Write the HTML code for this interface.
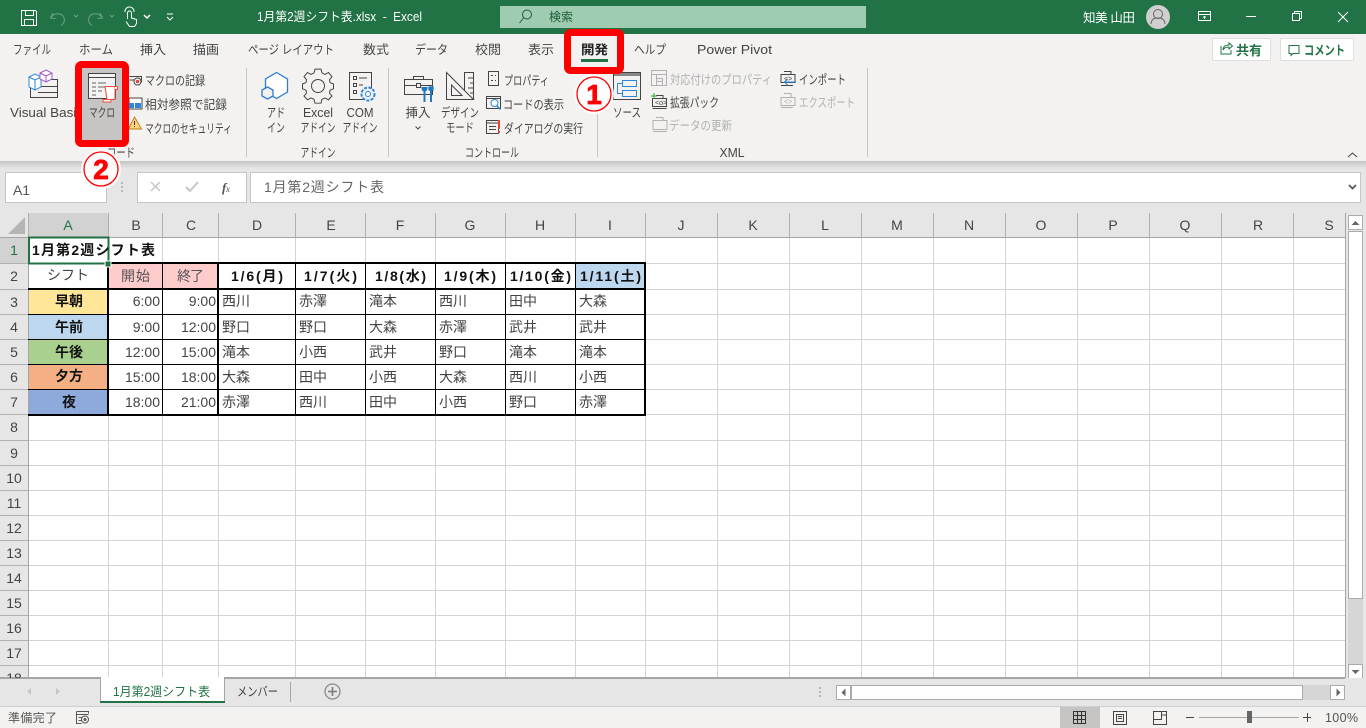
<!DOCTYPE html>
<html lang="ja"><head><meta charset="utf-8"><title>Excel</title>
<style>
html,body{margin:0;padding:0;background:#e6e6e6;overflow:hidden}
svg{display:block}
text{font-family:"Liberation Sans","Noto Sans CJK JP",sans-serif;font-size:12px;fill:#444}
.c{text-anchor:middle}
.r{text-anchor:end}
.t{font-size:12.5px;fill:#444}
.rb{font-size:12.5px;fill:#444}
.dis{font-size:12.5px;fill:#b1b1b1}
.h{font-size:14px;fill:#444;text-anchor:middle}
.cell{font-size:14px;fill:#444}
.b{font-size:14px;font-weight:700;fill:#111}
.line{stroke:#444;stroke-width:1;fill:none}
.g{stroke:#b1b1b1;stroke-width:1;fill:none}
.bl{stroke:#2b88d8;stroke-width:1;fill:none}
.w{stroke:#fff;stroke-width:1;fill:none}
</style></head><body>
<svg width="1366" height="728" viewBox="0 0 1366 728" xmlns="http://www.w3.org/2000/svg">
<defs><linearGradient id="sh" x1="0" y1="0" x2="0" y2="1"><stop offset="0" stop-color="#c4c4c4"/><stop offset="1" stop-color="#e6e6e6"/></linearGradient></defs>
<rect width="1366" height="728" fill="#e6e6e6"/>
<!-- title bar -->
<rect width="1366" height="34" fill="#217346"/>
<g shape-rendering="crispEdges">
<path class="w" d="M21.5 10.5h14l1 1v14h-15zM25.5 10.5v5h8v-5M24.5 25.5v-6h9v6"/>
</g>
<path d="M53 13l-2.500 5 5 .5M51 17.500c3-5 11-5 13 0 1 3 0 6-3 8" stroke="#6ea287" fill="none"/>
<path d="M74 15l2 2 2-2M110 15l2 2 2-2" stroke="#6ea287" fill="none"/>
<path d="M100 13l2.500 5-5 .5M102 17.500c-3-5-11-5-13 0-1 3 0 6 3 8" stroke="#6ea287" fill="none"/>
<path d="M127.500 19v-6a2 2 0 0 1 4 0v5l5 1.500v4l-2 3h-5l-3.500-5M125 12a4.500 4.500 0 0 1 4-5 4.500 4.500 0 0 1 5 5" stroke="#fff" fill="none"/>
<path d="M144 15l3 3 3-3" stroke="#fff" stroke-width="1.500" fill="none"/>
<path d="M167 14h6M167 17l3 3 3-3" stroke="#fff" fill="none"/>
<text x="257" y="21" style="fill:#fff;font-size:12.500px" textLength="165" lengthAdjust="spacingAndGlyphs">1月第2週シフト表.xlsx&#160;&#160;-&#160;&#160;Excel</text>
<rect x="500" y="6" width="366" height="22" fill="#9fcbb0"/>
<circle cx="527" cy="14.500" r="4.500" fill="none" stroke="#1d5c38"/><path d="M523.500 18l-4 5" stroke="#1d5c38" fill="none"/>
<text x="549" y="21" style="fill:#1d5c38;font-size:12px" textLength="24">検索</text>
<text x="1083" y="22" style="fill:#fff;font-size:12.500px" textLength="52">知美 山田</text>
<circle cx="1158" cy="17" r="12" fill="#cfcfcf"/>
<circle cx="1158" cy="14" r="4.500" fill="none" stroke="#666"/><path d="M1151 24c.5-5 3-6 7-6s6.500 1 7 6" fill="none" stroke="#666"/>
<g shape-rendering="crispEdges">
<path class="w" d="M1198.500 11.500h12v9h-12zM1198.500 14.500h12"/>
<path class="w" d="M1204.500 19v-3M1203 17h3"/>
<path d="M1246 16.500h10" stroke="#fff"/>
<path class="w" d="M1292.500 13.500h7v7h-7zM1294.500 13.500v-2h7v7h-2"/>
</g>
<path d="M1338 12l10 10M1348 12l-10 10" stroke="#fff" fill="none"/>
<!-- ribbon -->
<rect y="34" width="1366" height="127" fill="#f3f2f1"/>
<rect y="161" width="1366" height="8" fill="url(#sh)"/>
<g class="tabs">
<text class="t" x="13" y="54" textLength="38" lengthAdjust="spacingAndGlyphs">ファイル</text>
<text class="t" x="79" y="54" textLength="34" lengthAdjust="spacingAndGlyphs">ホーム</text>
<text class="t" x="140" y="54" textLength="26" lengthAdjust="spacingAndGlyphs">挿入</text>
<text class="t" x="193" y="54" textLength="26" lengthAdjust="spacingAndGlyphs">描画</text>
<text class="t" x="248" y="54" textLength="86" lengthAdjust="spacingAndGlyphs">ページ レイアウト</text>
<text class="t" x="363" y="54" textLength="26" lengthAdjust="spacingAndGlyphs">数式</text>
<text class="t" x="415" y="54" textLength="33" lengthAdjust="spacingAndGlyphs">データ</text>
<text class="t" x="475" y="54" textLength="26" lengthAdjust="spacingAndGlyphs">校閲</text>
<text class="t" x="528" y="54" textLength="26" lengthAdjust="spacingAndGlyphs">表示</text>
<text class="t" x="634" y="54" textLength="32" lengthAdjust="spacingAndGlyphs">ヘルプ</text>
<text class="t" x="697" y="54" textLength="75" lengthAdjust="spacingAndGlyphs">Power Pivot</text>
</g>
<!-- share buttons -->
<rect x="1212.500" y="38.500" width="58" height="22" rx="1" fill="#fff" stroke="#e1dfdd"/>
<rect x="1280.500" y="38.500" width="73" height="22" rx="1" fill="#fff" stroke="#e1dfdd"/>
<path d="M1221 46v8h10v-4M1223 50c0-3 2-5 6-5v-2l3.500 3-3.500 3v-2c-3 0-5 1-6 3z" fill="none" stroke="#217346"/>
<text x="1236" y="55" style="fill:#217346;font-size:13px;font-weight:700" textLength="26" lengthAdjust="spacingAndGlyphs">共有</text>
<path d="M1289 45.500h10v8h-6l-2 2v-2h-2z" fill="none" stroke="#217346"/>
<text x="1304" y="55" style="fill:#217346;font-size:13px;font-weight:700" textLength="41" lengthAdjust="spacingAndGlyphs">コメント</text>
<path d="M1348 157l4.500-4 4.500 4" fill="none" stroke="#444"/>
<!-- separators -->
<g shape-rendering="crispEdges" stroke="#c8c6c4">
<path d="M246.500 68v89M388.500 68v89M597.500 68v89M867.500 68v89"/>
</g>
<!-- Visual Basic icon -->
<g>
<path class="line" d="M30.500 79.500h27v18h-27zM38 86.500h19M38 92.500h19" shape-rendering="crispEdges"/>
<path d="M29 77l6-3 6 3v10l-6 3-6-3z" fill="#fff" stroke="#2b88d8"/><path d="M29 77l6 3 6-3M35 80v10" fill="none" stroke="#2b88d8"/>
<path d="M40 73l6-3 6 3v6l-6 3-6-3z" fill="#fff" stroke="#a454c6"/><path d="M40 73l6 3 6-3M46 76v6" fill="none" stroke="#a454c6"/>
</g>
<text class="rb" x="10" y="117" textLength="73" lengthAdjust="spacingAndGlyphs">Visual Basic</text>
<!-- macro buttons -->
<g>
<path class="line" d="M129.500 76.500h12v6M129.500 80h10" shape-rendering="crispEdges"/>
<circle cx="137.500" cy="81.500" r="3.500" fill="#fff" stroke="#444"/><circle cx="137.500" cy="81.500" r="1.800" fill="#e8443a"/>
<rect x="129" y="98" width="13" height="11" fill="#fff" stroke="#444"/><rect x="129" y="103" width="5" height="5" fill="#2b88d8"/><rect x="135" y="103" width="6" height="5" fill="#2b88d8"/>
<path d="M134.500 117l7 12h-13z" fill="#fcd77a" stroke="#c27c1e"/><rect x="134" y="121" width="1" height="4" fill="#333"/><rect x="134" y="126" width="1" height="1" fill="#333"/>
</g>
<text class="rb" x="145" y="85" textLength="60" lengthAdjust="spacingAndGlyphs">マクロの記録</text>
<text class="rb" x="145" y="109" textLength="82" lengthAdjust="spacingAndGlyphs">相対参照で記録</text>
<text class="rb" x="145" y="133" textLength="87" lengthAdjust="spacingAndGlyphs">マクロのセキュリティ</text>
<text class="rb c" x="121" y="157" textLength="28" lengthAdjust="spacingAndGlyphs">コード</text>
<!-- macro highlighted -->
<rect x="78.500" y="64.500" width="47" height="79" rx="3" fill="#c6c5c3" stroke="#ff0000" stroke-width="7"/>
<rect x="88.500" y="73.500" width="27" height="25" fill="#f3f3f3" stroke="#444"/>
<path d="M88.500 77.500h27" stroke="#444"/>
<path d="M92 83h4M98 83h8M92 87h4M98 87h8M92 91h4M98 91h4M92 95h4" stroke="#666"/>
<path d="M105 86.500h10v13h-8z" fill="#fff" stroke="#ee4b41"/><path d="M103 99.500h8v2.500h-8zM115 86.500h2.500v3h-2.500" fill="#fff" stroke="#ee4b41"/>
<text class="rb" x="89" y="117" textLength="26" lengthAdjust="spacingAndGlyphs">マクロ</text>
<!-- add-ins -->
<path d="M276.500 72.500l11 6.500v13l-11 6.500-11-6.500v-13z" fill="#fff" stroke="#2b7cd3" stroke-width="1.300"/>
<path d="M267.500 87l5.500 3v6l-5.500 3-5.500-3v-6z" fill="#f3f2f1" stroke="#2b7cd3" stroke-width="1.300"/>
<text class="rb c" x="276" y="117" textLength="18" lengthAdjust="spacingAndGlyphs">アド</text><text class="rb c" x="276" y="132" textLength="18" lengthAdjust="spacingAndGlyphs">イン</text>
<g fill="#f3f2f1" stroke="#444"><path d="M315 72h6l1 4 3 1.500 3.500-2 3.500 4.500-2.500 3 .5 3 3.500 1.500v5l-3.500 1.500-.5 3 2.500 3-3.500 4-3.500-2-3 1.500-1 4h-6l-1-4-3-1.500-3.500 2-3.500-4 2.500-3-.5-3-3.500-1.500v-5l3.500-1.500.5-3-2.500-3 3.500-4.500 3.500 2 3-1.500z" transform="translate(-0 0) scale(1 .96)"/><circle cx="318" cy="86" r="6.500"/></g>
<text class="rb c" x="318" y="117" textLength="30" lengthAdjust="spacingAndGlyphs">Excel</text><text class="rb c" x="318" y="132" textLength="35" lengthAdjust="spacingAndGlyphs">アドイン</text>
<g shape-rendering="crispEdges"><path class="line" d="M349.500 72.500h22v27h-22z"/><path class="line" d="M353.500 76.500h3v3h-3zM353.500 83.500h3v3h-3zM353.500 90.500h3v3h-3zM359 78h8M359 85h4"/></g>
<circle cx="368" cy="94" r="6.500" fill="#f3f2f1" stroke="#2b88d8" stroke-width="2" stroke-dasharray="3 1.400"/><circle cx="368" cy="94" r="2.500" fill="#fff" stroke="#2b88d8"/>
<text class="rb c" x="360" y="117" textLength="27" lengthAdjust="spacingAndGlyphs">COM</text><text class="rb c" x="360" y="132" textLength="35" lengthAdjust="spacingAndGlyphs">アドイン</text>
<text class="rb c" x="318" y="157" textLength="35" lengthAdjust="spacingAndGlyphs">アドイン</text>
<!-- controls -->
<g shape-rendering="crispEdges"><path class="line" d="M404.500 79.500h28v15h-28zM413.500 79.500v-3h10v3M404.500 85.500h12M421 85.500h11M416.500 83.500h4v4h-4z"/></g>
<path d="M424.500 87v15M431 87v15" stroke="#1f78c1" stroke-width="2" fill="none"/>
<path d="M422 87c0 3 1 4 2.500 4s2.500-1 2.500-4M429 87h4v3h-4z" stroke="#1f78c1" stroke-width="1.200" fill="#1f78c1"/>
<text class="rb c" x="418" y="117" textLength="25" lengthAdjust="spacingAndGlyphs">挿入</text>
<path d="M415.500 126.500l2.500 2.500 2.500-2.500" fill="none" stroke="#444"/>
<path d="M464.500 72.500h9v27h-9z" fill="#f3f2f1" stroke="#444" shape-rendering="crispEdges"/>
<path d="M468 78h5M470 83h3M468 88h5M470 93h3" stroke="#444" shape-rendering="crispEdges"/>
<path d="M446.500 72.500v27h27z" fill="#f3f2f1" stroke="#444"/><path d="M451.500 85l10.500 10.500h-10.500z" fill="#f3f2f1" stroke="#444"/>
<text class="rb c" x="460" y="117" textLength="38" lengthAdjust="spacingAndGlyphs">デザイン</text><text class="rb c" x="460" y="132" textLength="28" lengthAdjust="spacingAndGlyphs">モード</text>
<g shape-rendering="crispEdges">
<path class="line" d="M488.500 71.500h10v14h-10z"/><path class="line" d="M491 75.500h2M491 80.500h2M495 75.500h1M495 80.500h1"/>
<path class="line" d="M486.500 96.500h14v12h-14zM486.500 98.500h14"/>
<path class="line" d="M486.500 120.500h12v13h-12zM486.500 123h12M489 126.500h7M489 129.500h7"/>
<rect x="498" y="120" width="2" height="9" fill="#e8443a"/><rect x="498" y="131" width="2" height="2" fill="#e8443a"/>
</g>
<circle cx="494.500" cy="103" r="3.500" fill="#fff" stroke="#2b88d8"/><path d="M497 106l3.500 3.500" stroke="#2b88d8" stroke-width="1.500"/>
<text class="rb" x="504" y="85" textLength="45" lengthAdjust="spacingAndGlyphs">プロパティ</text>
<text class="rb" x="503" y="109" textLength="61" lengthAdjust="spacingAndGlyphs">コードの表示</text>
<text class="rb" x="504" y="133" textLength="79" lengthAdjust="spacingAndGlyphs">ダイアログの実行</text>
<text class="rb c" x="492" y="157" textLength="54" lengthAdjust="spacingAndGlyphs">コントロール</text>
<!-- XML -->
<g shape-rendering="crispEdges">
<path class="line" d="M613.500 72.500h27v27h-27z"/><rect x="614" y="73" width="26" height="3" fill="#888"/>
<path class="bl" d="M622.500 80.500h14v6h-14zM622.500 90.500h14v6h-14zM617.500 83.500v10h5M617.500 83.500h5"/>
</g>
<text class="rb c" x="627" y="117" textLength="28" lengthAdjust="spacingAndGlyphs">ソース</text>
<g shape-rendering="crispEdges">
<path class="g" d="M651.500 70.500h15v15h-15zM651.500 74.500h15M656.500 74.500v11M656.500 78.500h6v7h-6M662.500 81.500h-6"/>
<path d="M652.500 98.500h14v8h-14zM656 95.500h7v3" fill="none" stroke="#444"/>
<path d="M652.500 108.500h14" stroke="#444"/>
<path class="g" d="M653 120.500h14v9h-14zM656 117.500h7v3M653 131.500h14"/>
<path class="g" d="M781 97.500h14v8h-14zM784 93.500h7v4M781 107.500h12"/>
</g>
<path d="M651 96h6M654 93v6" stroke="#2aa42a" fill="none"/>
<text x="655" y="105" style="font-size:7px;fill:#444">&lt;o&gt;</text>
<text x="784" y="104" style="font-size:7px;fill:#b1b1b1">&lt;&gt;</text>
<text class="dis" x="670" y="84" textLength="102" lengthAdjust="spacingAndGlyphs">対応付けのプロパティ</text>
<text class="rb" x="670" y="107" textLength="49" lengthAdjust="spacingAndGlyphs">拡張パック</text>
<text class="dis" x="669" y="130" textLength="63" lengthAdjust="spacingAndGlyphs">データの更新</text>
<path d="M781 74.500h14v8h-14zM784 71.500h7v3M781 85.500h12" fill="none" stroke="#444" shape-rendering="crispEdges"/>
<path d="M796 82h-12M787.500 79l-3 3 3 3" fill="none" stroke="#2b88d8"/>
<text x="784" y="81" style="font-size:7px;fill:#444">&lt;&gt;</text>
<text class="rb" x="799" y="84" textLength="47" lengthAdjust="spacingAndGlyphs">インポート</text>
<text class="dis" x="799" y="107" textLength="56" lengthAdjust="spacingAndGlyphs">エクスポート</text>
<text class="rb c" x="732" y="157" textLength="25" lengthAdjust="spacingAndGlyphs">XML</text>
<!-- red tab box -->
<rect x="567.500" y="32.500" width="53" height="38" rx="3" fill="#f3f2f1" stroke="#ff0000" stroke-width="7"/>
<text x="581" y="54" style="font-size:12.500px;font-weight:700;fill:#222" textLength="27" lengthAdjust="spacingAndGlyphs">開発</text>
<rect x="581" y="59" width="27" height="3" fill="#217346"/>
<!-- formula bar -->
<rect x="5.500" y="172.500" width="101" height="30" fill="#fff" stroke="#c6c6c6"/>
<text x="13" y="195" style="font-size:14px;fill:#555" textLength="17">A1</text>
<circle cx="122" cy="183" r="1" fill="#aaa"/><circle cx="122" cy="187" r="1" fill="#aaa"/><circle cx="122" cy="191" r="1" fill="#aaa"/>
<rect x="137.500" y="172.500" width="109" height="30" fill="#fff" stroke="#c6c6c6"/>
<rect x="250.500" y="172.500" width="1110" height="30" fill="#fff" stroke="#c6c6c6"/>
<path d="M151 182l9 9M160 182l-9 9" stroke="#c6c6c6" stroke-width="1.500" fill="none"/>
<path d="M186 187l4 4 8-9" stroke="#c6c6c6" stroke-width="2" fill="none"/>
<text x="222" y="192" style="font-family:'Liberation Serif',serif;font-style:italic;font-size:13px;font-weight:700;fill:#555">f</text>
<text x="226" y="192" style="font-family:'Liberation Serif',serif;font-style:italic;font-size:9px;fill:#555">x</text>
<text x="264" y="192" style="font-size:14px;fill:#666" textLength="120">1月第2週シフト表</text>
<path d="M1349 185l3.500 3.500 3.500-3.500" stroke="#555" stroke-width="1.700" fill="none"/>
<!-- circle badge 2 -->
<circle cx="101" cy="169" r="20" fill="#fff" fill-opacity=".85"/>
<circle cx="101" cy="169" r="17" fill="none" stroke="#ff0000" stroke-width="1.300"/>
<text class="c" x="101" y="179" style="font-size:28px;font-weight:700;fill:#ff0000;stroke:#ff0000;stroke-width:.8">2</text>
<!-- sheet -->
<rect x="28" y="237" width="1317" height="441" fill="#fff"/>
<rect x="0" y="213" width="1345" height="24" fill="#e6e6e6"/>
<rect x="0" y="237" width="28" height="441" fill="#e6e6e6"/>
<rect x="29" y="213" width="80" height="24" fill="#d2d2d2"/>
<rect x="0" y="238" width="28" height="25" fill="#d2d2d2"/>
<path d="M8 234l17-17v17z" fill="#b5b5b5"/>
<g shape-rendering="crispEdges" stroke="#d4d4d4" stroke-width="1">
<path d="M28 263.500H1345M28 289.500H1345M28 314.500H1345M28 339.500H1345M28 364.500H1345M28 389.500H1345M28 414.500H1345M28 440.500H1345M28 465.500H1345M28 490.500H1345M28 515.500H1345M28 540.500H1345M28 565.500H1345M28 590.500H1345M28 615.500H1345M28 640.500H1345M28 665.500H1345"/>
<path d="M108.500 237V678M162.500 237V678M218.500 237V678M295.500 237V678M365.500 237V678M435.500 237V678M505.500 237V678M575.500 237V678M645.500 237V678M717.500 237V678M789.500 237V678M861.500 237V678M933.500 237V678M1005.500 237V678M1077.500 237V678M1149.500 237V678M1221.500 237V678M1293.500 237V678"/>
</g>
<g shape-rendering="crispEdges" stroke="#b1b1b1">
<path d="M28.500 213V237M108.500 213V237M162.500 213V237M218.500 213V237M295.500 213V237M365.500 213V237M435.500 213V237M505.500 213V237M575.500 213V237M645.500 213V237M717.500 213V237M789.500 213V237M861.500 213V237M933.500 213V237M1005.500 213V237M1077.500 213V237M1149.500 213V237M1221.500 213V237M1293.500 213V237"/>
<path d="M0 263.500H28M0 289.500H28M0 314.500H28M0 339.500H28M0 364.500H28M0 389.500H28M0 414.500H28M0 440.500H28M0 465.500H28M0 490.500H28M0 515.500H28M0 540.500H28M0 565.500H28M0 590.500H28M0 615.500H28M0 640.500H28M0 665.500H28"/>
<path stroke="#a5a5a5" d="M0 237.500H1345M28.500 237V678M1345.500 213V678M0 677.500H1345"/>
</g>
<g>
<text class="h" x="68" y="230" style="fill:#217346">A</text><text class="h" x="136" y="230">B</text><text class="h" x="191" y="230">C</text><text class="h" x="257" y="230">D</text><text class="h" x="331" y="230">E</text><text class="h" x="400" y="230">F</text><text class="h" x="470" y="230">G</text><text class="h" x="540" y="230">H</text><text class="h" x="610" y="230">I</text><text class="h" x="681" y="230">J</text><text class="h" x="753" y="230">K</text><text class="h" x="825" y="230">L</text><text class="h" x="897" y="230">M</text><text class="h" x="969" y="230">N</text><text class="h" x="1041" y="230">O</text><text class="h" x="1113" y="230">P</text><text class="h" x="1185" y="230">Q</text><text class="h" x="1258" y="230">R</text><text class="h" x="1329" y="230">S</text>
<text class="h" x="14" y="255" style="fill:#217346">1</text><text class="h" x="14" y="281">2</text><text class="h" x="14" y="307">3</text><text class="h" x="14" y="332">4</text><text class="h" x="14" y="357">5</text><text class="h" x="14" y="382">6</text><text class="h" x="14" y="407">7</text><text class="h" x="14" y="432">8</text><text class="h" x="14" y="458">9</text><text class="h" x="14" y="483">10</text><text class="h" x="14" y="508">11</text><text class="h" x="14" y="533">12</text><text class="h" x="14" y="558">13</text><text class="h" x="14" y="583">14</text><text class="h" x="14" y="608">15</text><text class="h" x="14" y="633">16</text><text class="h" x="14" y="658">17</text><text class="h" x="14" y="683">18</text>
</g>
<!-- fills -->
<g shape-rendering="crispEdges">
<rect x="29" y="290" width="79" height="25" fill="#ffe699"/>
<rect x="29" y="315" width="79" height="25" fill="#bdd7ee"/>
<rect x="29" y="340" width="79" height="25" fill="#a9d08e"/>
<rect x="29" y="365" width="79" height="25" fill="#f4b084"/>
<rect x="29" y="390" width="79" height="25" fill="#8ea9db"/>
<rect x="109" y="264" width="109" height="25" fill="#ffcccc"/>
<rect x="576" y="264" width="69" height="25" fill="#bdd7ee"/>
<!-- table borders -->
<path stroke="#000" d="M28 314.500H645M28 339.500H645M28 364.500H645M28 389.500H645M162.500 263V415M295.500 263V415M365.500 263V415M435.500 263V415M505.500 263V415M575.500 263V415"/>
<rect x="108" y="262" width="538" height="2" fill="#000"/>
<rect x="28" y="288" width="618" height="2" fill="#000"/>
<rect x="28" y="414" width="618" height="2" fill="#000"/>
<rect x="107" y="262" width="2" height="154" fill="#000"/>
<rect x="217" y="262" width="2" height="154" fill="#000"/>
<rect x="644" y="262" width="2" height="154" fill="#000"/>
<!-- selection -->
<rect x="29" y="237.500" width="79.500" height="26" fill="none" stroke="#217346" stroke-width="2"/>
<rect x="105" y="261" width="6" height="6" fill="#217346" stroke="#fff" stroke-width="1"/>
</g>
<!-- cell text -->
<g>
<text class="b" x="32" y="255" textLength="123">1月第2週シフト表</text>
<text class="cell c" x="68" y="280" textLength="42">シフト</text>
<text class="cell" x="121" y="281" textLength="29" style="fill:#555">開始</text>
<text class="cell" x="177" y="281" textLength="27" style="fill:#555">終了</text>
<text class="b" x="231" y="281" textLength="52">1/6(月)</text>
<text class="b" x="304" y="281" textLength="53">1/7(火)</text>
<text class="b" x="375" y="281" textLength="51">1/8(水)</text>
<text class="b" x="444" y="281" textLength="52">1/9(木)</text>
<text class="b" x="510" y="281" textLength="61">1/10(金)</text>
<text class="b" x="580" y="281" textLength="61">1/11(土)</text>
<text class="b c" x="69" y="306">早朝</text><text class="b c" x="69" y="332">午前</text><text class="b c" x="69" y="357">午後</text><text class="b c" x="69" y="381">夕方</text><text class="b c" x="69" y="407">夜</text>
<text class="cell r" x="160" y="306">6:00</text><text class="cell r" x="160" y="332">9:00</text><text class="cell r" x="160" y="357">12:00</text><text class="cell r" x="160" y="382">15:00</text><text class="cell r" x="160" y="407">18:00</text>
<text class="cell r" x="216" y="306">9:00</text><text class="cell r" x="216" y="332">12:00</text><text class="cell r" x="216" y="357">15:00</text><text class="cell r" x="216" y="382">18:00</text><text class="cell r" x="216" y="407">21:00</text>
<text class="cell" x="222" y="306">西川</text><text class="cell" x="222" y="332">野口</text><text class="cell" x="222" y="357">滝本</text><text class="cell" x="222" y="382">大森</text><text class="cell" x="222" y="407">赤澤</text>
<text class="cell" x="299" y="306">赤澤</text><text class="cell" x="299" y="332">野口</text><text class="cell" x="299" y="357">小西</text><text class="cell" x="299" y="382">田中</text><text class="cell" x="299" y="407">西川</text>
<text class="cell" x="369" y="306">滝本</text><text class="cell" x="369" y="332">大森</text><text class="cell" x="369" y="357">武井</text><text class="cell" x="369" y="382">小西</text><text class="cell" x="369" y="407">田中</text>
<text class="cell" x="439" y="306">西川</text><text class="cell" x="439" y="332">赤澤</text><text class="cell" x="439" y="357">野口</text><text class="cell" x="439" y="382">大森</text><text class="cell" x="439" y="407">小西</text>
<text class="cell" x="509" y="306">田中</text><text class="cell" x="509" y="332">武井</text><text class="cell" x="509" y="357">滝本</text><text class="cell" x="509" y="382">西川</text><text class="cell" x="509" y="407">野口</text>
<text class="cell" x="579" y="306">大森</text><text class="cell" x="579" y="332">武井</text><text class="cell" x="579" y="357">滝本</text><text class="cell" x="579" y="382">小西</text><text class="cell" x="579" y="407">赤澤</text>
</g>
<!-- badge 1 -->
<circle cx="594" cy="94" r="20" fill="#fff" fill-opacity=".92"/>
<circle cx="594" cy="94" r="17" fill="none" stroke="#ff0000" stroke-width="1.300"/>
<text class="c" x="594" y="104" style="font-size:28px;font-weight:700;fill:#ff0000;stroke:#ff0000;stroke-width:.8">1</text>
<!-- v scrollbar -->
<rect x="1348" y="231" width="15" height="433" fill="#d6d6d6"/>
<g shape-rendering="crispEdges">
<rect x="1348.500" y="215.500" width="14" height="14" fill="#fff" stroke="#ababab"/>
<rect x="1348.500" y="231.500" width="14" height="367" fill="#fff" stroke="#ababab"/>
<rect x="1348.500" y="664.500" width="14" height="14" fill="#fff" stroke="#ababab"/>
</g>
<path d="M1351.500 225l4-4 4 4z" fill="#666"/><path d="M1351.500 670h8l-4 4z" fill="#666"/>
<!-- tab bar -->
<rect x="0" y="678" width="1366" height="28" fill="#e6e6e6"/>
<rect x="0" y="706" width="1366" height="1" fill="#cfcfcf"/>
<g shape-rendering="crispEdges">
<rect x="0" y="678" width="100" height="1" fill="#a5a5a5"/>
<rect x="224" y="678" width="1121" height="1" fill="#a5a5a5"/>
<rect x="100" y="678" width="1" height="25" fill="#a5a5a5"/>
<rect x="224" y="678" width="1" height="25" fill="#a5a5a5"/>
<rect x="101" y="677" width="123" height="25" fill="#fff"/>
<rect x="100" y="701" width="125" height="2" fill="#217346"/>
<rect x="290" y="682" width="1" height="20" fill="#a5a5a5"/>
</g>
<path d="M31 688l-4 3.500 4 3.500zM56 688l4 3.500-4 3.500z" fill="#c6c6c6"/>
<text x="113" y="696" style="font-size:12.500px;fill:#217346" textLength="97" lengthAdjust="spacingAndGlyphs">1月第2週シフト表</text>
<text x="237" y="696" style="font-size:12.500px;fill:#444" textLength="41" lengthAdjust="spacingAndGlyphs">メンバー</text>
<circle cx="332.500" cy="691.500" r="7.500" fill="none" stroke="#8a8a8a" stroke-width="1.300"/>
<path d="M332.500 687v9M328 691.500h9" stroke="#7a7a7a" stroke-width="1.600"/>
<circle cx="820" cy="688" r="1" fill="#aaa"/><circle cx="820" cy="692" r="1" fill="#aaa"/><circle cx="820" cy="696" r="1" fill="#aaa"/>
<rect x="1303" y="685" width="28" height="15" fill="#d6d6d6"/>
<g shape-rendering="crispEdges">
<rect x="836.500" y="685.500" width="14" height="14" fill="#fff" stroke="#ababab"/>
<rect x="851.500" y="685.500" width="451" height="14" fill="#fff" stroke="#ababab"/>
<rect x="1330.500" y="685.500" width="14" height="14" fill="#fff" stroke="#ababab"/>
</g>
<path d="M845.500 688.500l-4 4 4 4zM1336.500 688.500l4 4-4 4z" fill="#666"/>
<!-- status bar -->
<rect x="0" y="707" width="1366" height="21" fill="#f3f2f1"/>
<text x="8" y="722" style="font-size:12px;fill:#555" textLength="49">準備完了</text>
<path d="M76.500 711.500h12v2M76.500 711.500v12h5M76.500 714.500h12M78.500 717.500h3M78.500 720.500h3" fill="none" stroke="#555" shape-rendering="crispEdges"/>
<circle cx="85" cy="719.500" r="3.500" fill="none" stroke="#555"/><circle cx="85" cy="719.500" r="1.500" fill="#555"/>
<rect x="1060" y="707" width="40" height="21" fill="#c6c5c3"/>
<g shape-rendering="crispEdges" fill="none" stroke="#333">
<path stroke-width="1" d="M1073.500 711.500h12v12h-12zM1077.500 711.500v12M1081.500 711.500v12M1073.500 715.500h12M1073.500 719.500h12"/>
<path stroke="#444" d="M1113.500 711.500h13v13h-13zM1116.500 714.500h7v7h-7zM1118 716.500h4M1118 718.500h4"/>
<path stroke="#444" d="M1153.500 711.500h13v13h-13zM1153.500 719.500h8v-8M1161.500 715h5"/>
</g>
<g shape-rendering="crispEdges">
<rect x="1186" y="717" width="8" height="1" fill="#444"/>
<rect x="1199" y="717" width="100" height="1" fill="#a5a5a5"/>
<rect x="1247" y="711" width="5" height="12" fill="#666"/>
<rect x="1303" y="717" width="8" height="1" fill="#444"/>
<rect x="1307" y="713" width="1" height="9" fill="#444"/>
</g>
<text x="1325" y="722" style="font-size:12.500px;fill:#555" textLength="33">100%</text>
</svg>
</body></html>
